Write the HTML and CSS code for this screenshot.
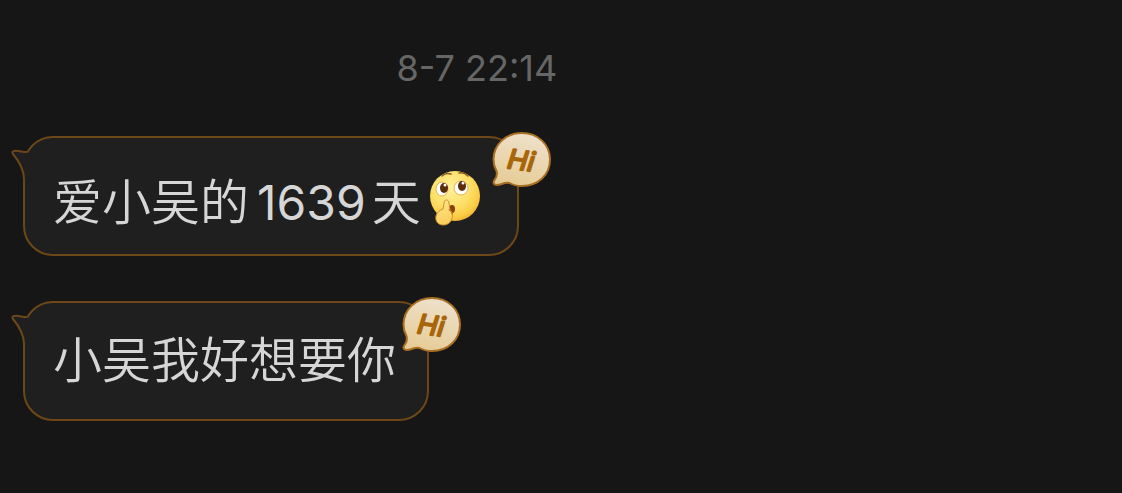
FILE: index.html
```html
<!DOCTYPE html>
<html lang="zh-CN">
<head>
    <meta charset="UTF-8">
    <meta name="viewport" content="width=device-width, initial-scale=1.0">
    <title>聊天</title>
    <link rel="stylesheet" href="styles.css">
</head>
<body>
    <!-- shared shapes -->
    <svg class="defs" width="0" height="0" aria-hidden="true">
        <defs>
            <linearGradient id="badgeFill" x1="0.6" y1="0" x2="0.3" y2="1">
                <stop offset="0" stop-color="#eee1cb"/>
                <stop offset="1" stop-color="#e6cb94"/>
            </linearGradient>
            <symbol id="tail" viewBox="0 0 18 36">
                <path class="tail-fill" d="M18 8 C12 8 8 6 4 7 C2 7 2 9 3 10 C8 16 14 25 14 34 L18 34 Z"/>
                <path class="tail-line" d="M17.5 8 C13 8.5 8 6 4 7 C2 7.3 2 9 3 10 C8 16 14 25 14 35"/>
            </symbol>
            <symbol id="badge" viewBox="0 0 60 58">
                <path class="badge-shape" d="M30 2 C46 2 58 13.500 58 28.500 C58 44 46 55 30 55 C25 55 21 54 17.500 52 C12 51 9 54 5 54 C1 54 1 51 2.500 49 C5 46 5.500 43.500 4.500 40 C2.500 36.500 1.500 33 1.500 28.500 C1.500 13.500 14 2 30 2 Z"/>
                <text class="badge-text" x="16" y="39" transform="rotate(8 30 28)">Hi</text>
            </symbol>
        </defs>
    </svg>

    <main class="chat">
        <time class="time">8-7 22:14</time>

        <div class="bubble">
            <svg class="tail" aria-hidden="true"><use href="#tail"/></svg>
            <p class="message">爱小吴的<span class="number">1639</span>天<svg class="emoji" viewBox="0 0 54 56" role="img" aria-label="思考">
                <defs>
                    <radialGradient id="face" cx="0.42" cy="0.35" r="0.68">
                        <stop offset="0" stop-color="#fff09a"/>
                        <stop offset="0.55" stop-color="#fde06a"/>
                        <stop offset="0.85" stop-color="#fbcc45"/>
                        <stop offset="1" stop-color="#eeb136"/>
                    </radialGradient>
                    <linearGradient id="hand" x1="0" y1="0" x2="0.3" y2="1">
                        <stop offset="0" stop-color="#ffe68a"/>
                        <stop offset="1" stop-color="#fbcf5c"/>
                    </linearGradient>
                </defs>
                <circle cx="27" cy="26" r="25" fill="url(#face)"/>
                <path d="M14 6 C17 3 20 3 23 4 M31 3 C34 2 38 4 40 6" fill="none" stroke="#8b5a22" stroke-width="1.500" stroke-linecap="round"/>
                <ellipse cx="14" cy="19" rx="6" ry="7" fill="#fff" stroke="#e6b348"/>
                <ellipse cx="33" cy="18" rx="7" ry="7" fill="#fff" stroke="#e6b348"/>
                <ellipse cx="16" cy="18" rx="4" ry="5" fill="#5a2c0c"/>
                <ellipse cx="34" cy="16" rx="4" ry="5" fill="#5a2c0c"/>
                <circle cx="17" cy="15" r="1.500" fill="#fff"/>
                <circle cx="35" cy="13" r="1.500" fill="#fff"/>
                <ellipse cx="24" cy="39" rx="3" ry="4" fill="#8b3d0c"/>
                <path d="M16 33 C16 29 21 29 21 33 L22 40 C25 42 25 46 24 48 C23 53 19 55 15 55 C10 55 7 51 8 46 C9 42 12 40 15 39 Z" fill="url(#hand)" stroke="#cf8f2b" stroke-width="1"/>
                <path d="M21 40 C23 41 24 42 24 44" fill="none" stroke="#a96419" stroke-linecap="round"/>
            </svg></p>
            <svg class="badge"><use href="#badge"/></svg>
        </div>

        <div class="bubble">
            <svg class="tail" aria-hidden="true"><use href="#tail"/></svg>
            <p class="message">小吴我好想要你</p>
            <svg class="badge"><use href="#badge"/></svg>
        </div>
    </main>
</body>
</html>
```
FILE: styles.css
```css
body {
    margin: 0;
    background-color: #161616;
    font-family: Inter, "Noto Sans CJK SC", sans-serif;
}
.defs {
    position: absolute;
}
.chat {
    box-sizing: border-box;
    width: 85%;
    padding: 46px 0 45px 23px;
    display: flex;
    flex-direction: column;
    align-items: flex-start;
    gap: 45px;
}
.time {
    align-self: center;
    padding: 0 23px 1px 0;
    font-size: 36px;
    line-height: 44px;
    color: #666;
}
.bubble {
    position: relative;
    box-sizing: border-box;
    min-height: 120px;
    padding: 20px 31px 20px 28px;
    display: flex;
    align-items: center;
    background-color: #1f1f1f;
    border: 2px solid #6d4717;
    border-radius: 30px;
}
.message {
    margin: 0;
    font-family: Inter, "Noto Sans CJK SC DemiLight", "Noto Sans CJK SC", sans-serif;
    font-size: 49px;
    font-weight: 350;
    line-height: 60px;
    color: #d6d6d6;
}
.number {
    margin: 0 6px 0 8px;
    font-size: 48px;
    font-weight: 400;
}
.emoji {
    width: 54px;
    height: 56px;
    margin: 10px 4px 0 7px;
    vertical-align: -6px;
}
/* tail sits over the top left corner */
.tail {
    position: absolute;
    left: -15px;
    top: 6px;
    width: 18px;
    height: 36px;
}
.tail-fill {
    fill: #1f1f1f;
}
.tail-line {
    fill: none;
    stroke: #6d4717;
    stroke-width: 2;
    stroke-linejoin: round;
}
/* "Hi" sticker on the top right corner */
.badge {
    position: absolute;
    right: -35px;
    top: -7px;
    width: 60px;
    height: 58px;
}
.badge-shape {
    fill: url(#badgeFill);
    stroke: #a96f24;
    stroke-width: 2;
}
.badge-text {
    font-family: Inter, sans-serif;
    font-size: 27px;
    font-weight: 400;
    font-style: italic;
    fill: #a8660c;
    stroke: #a8660c;
    stroke-width: 2;
    stroke-linejoin: round;
}
```
